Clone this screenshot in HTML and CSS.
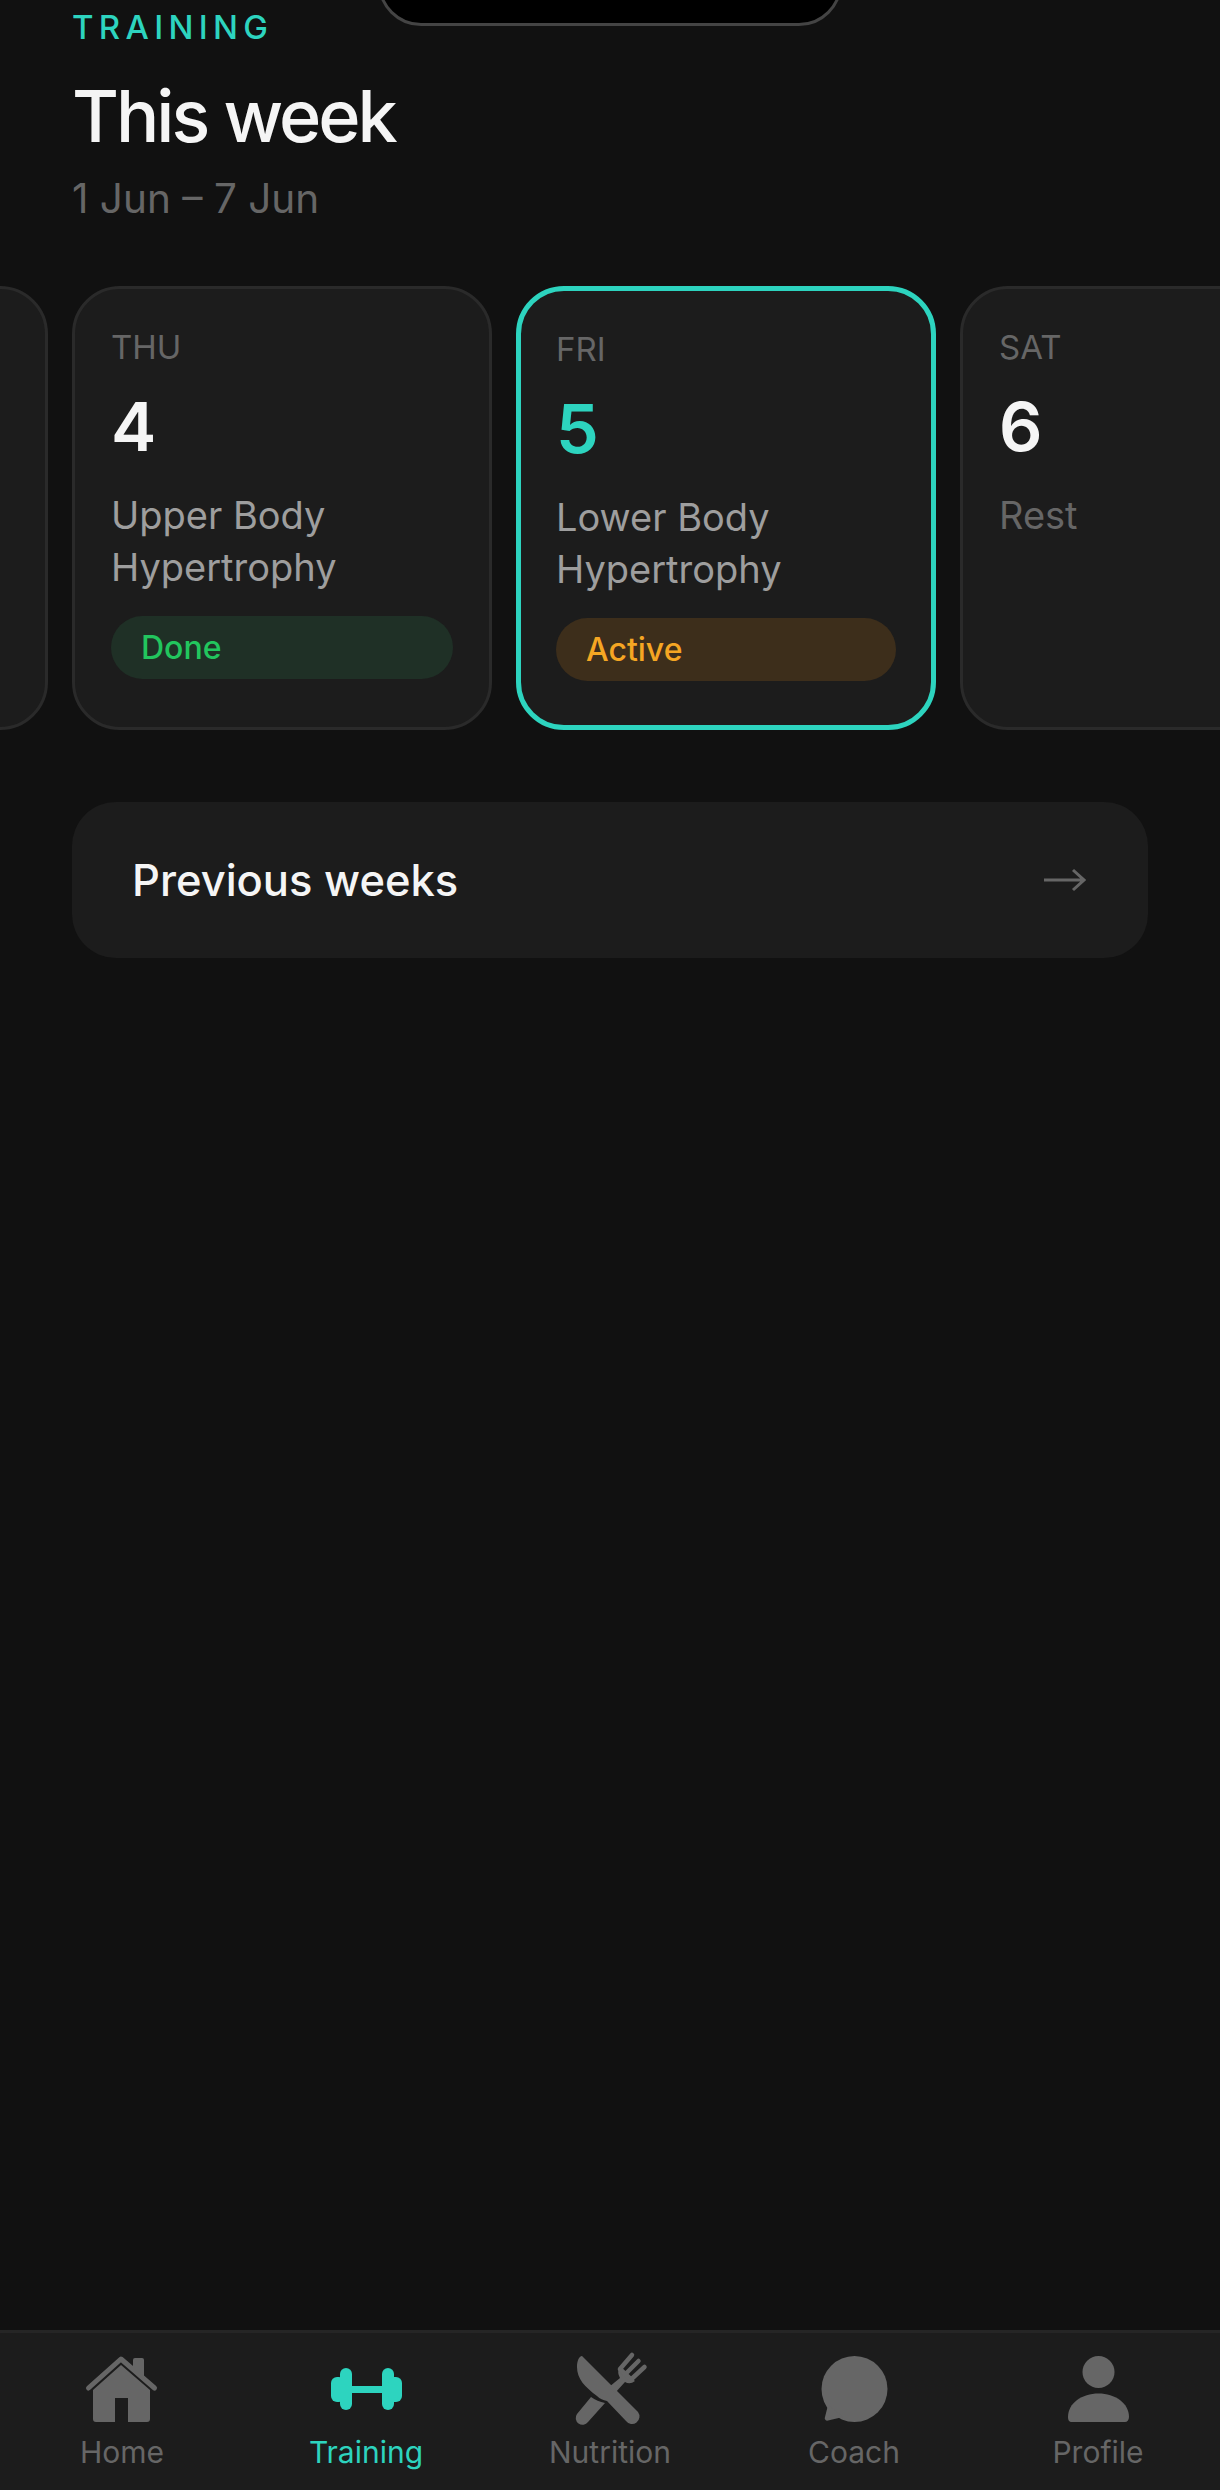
FILE: index.html
```html
<!DOCTYPE html>
<html lang="en">
<head>
    <meta charset="UTF-8">
    <meta name="viewport" content="width=device-width, initial-scale=1.0">
    <title>Training</title>
    <link rel="stylesheet" href="styles.css">
</head>
<body>
    <div class="notch"></div>

    <div class="page">
        <header class="header">
            <div class="eyebrow">TRAINING</div>
            <h1>This week</h1>
            <div class="date-range">1 Jun – 7 Jun</div>
        </header>

        <!-- Week strip, scrolled so that Thursday is first -->
        <div class="week-scroll">
            <div class="week-strip">
                <div class="day-card"></div>
                <div class="day-card">
                    <div class="day-name">THU</div>
                    <div class="day-number">4</div>
                    <div class="day-title">Upper Body Hypertrophy</div>
                    <div class="status status-done">Done</div>
                </div>
                <div class="day-card day-card-active">
                    <div class="day-name">FRI</div>
                    <div class="day-number">5</div>
                    <div class="day-title">Lower Body Hypertrophy</div>
                    <div class="status status-active">Active</div>
                </div>
                <div class="day-card">
                    <div class="day-name">SAT</div>
                    <div class="day-number">6</div>
                    <div class="day-title day-title-rest">Rest</div>
                </div>
            </div>
        </div>

        <div class="previous-weeks">
            <span>Previous weeks</span>
            <svg class="arrow" viewBox="0 0 42 24" width="42" height="24" fill="none" stroke="currentColor" stroke-width="3">
                <path d="M0 12H40M29 2L40 12L29 22"/>
            </svg>
        </div>
    </div>

    <nav class="tab-bar">
        <div class="tab">
            <svg class="tab-icon" viewBox="0 0 84 84" fill="currentColor">
                <path d="M56 13h7a2 2 0 0 1 2 2v18L54 24V15a2 2 0 0 1 2-2z"/>
                <path d="M9.500 43L42 14L75.500 43" fill="none" stroke="currentColor" stroke-width="5" stroke-linecap="round" stroke-linejoin="round"/>
                <path d="M42 20L71 45V74a3 3 0 0 1-3 3H49V53H36V77H17a3 3 0 0 1-3-3V45z"/>
            </svg>
            <span>Home</span>
        </div>
        <div class="tab tab-active">
            <svg class="tab-icon" viewBox="0 0 84 84" fill="currentColor">
                <rect x="8" y="32" width="14" height="25" rx="6"/>
                <rect x="17" y="23" width="12" height="42" rx="6"/>
                <rect x="59" y="23" width="12" height="42" rx="6"/>
                <rect x="65" y="32" width="14" height="25" rx="6"/>
                <rect x="28" y="41" width="32" height="7"/>
            </svg>
            <span>Training</span>
        </div>
        <div class="tab">
            <svg class="tab-icon" viewBox="0 0 84 84" fill="currentColor">
                <path d="M15 11L71 67a7 7 0 0 1-12 9L40 56C36 55 33 54 30 51C18 42 10 34 10 22C10 16 12 11 15 11z"/>
                <path d="M24 52C28 55 33 57 38 58L21 77a6.500 6.500 0 0 1-11-8z"/>
                <path d="M52 22Q50 28 53 33L42 42L48 48L58 37Q63 40 68 36z"/>
                <path d="M53 24L65 10M58.500 29L71.500 16M64 34.500L77.500 22M53 24L64 34.500" fill="none" stroke="currentColor" stroke-width="4.500" stroke-linecap="round"/>
            </svg>
            <span>Nutrition</span>
        </div>
        <div class="tab">
            <svg class="tab-icon" viewBox="0 0 84 84" fill="currentColor">
                <circle cx="43.500" cy="44" r="33"/>
                <path d="M17 60L14 72a2.500 2.500 0 0 0 3 3.500L32 72z"/>
            </svg>
            <span>Coach</span>
        </div>
        <div class="tab">
            <svg class="tab-icon" viewBox="0 0 84 84" fill="currentColor">
                <circle cx="43.500" cy="27" r="16"/>
                <path d="M13 72C13 58 27 48.500 43.500 48.500S74 58 74 72c0 3-2 5-4 5H17c-3 0-4-2-4-5z"/>
            </svg>
            <span>Profile</span>
        </div>
    </nav>
</body>
</html>
```

FILE: styles.css
```css
html, body {
    margin: 0;
    height: 100%;
}

body {
    background-color: #111111;
    font-family: 'Inter', 'Noto Sans', sans-serif;
    color: #f5f5f5;
    display: flex;
    flex-direction: column;
}

.notch {
    position: absolute;
    top: -60px;
    left: 378px;
    width: 464px;
    height: 86px;
    box-sizing: border-box;
    background-color: #000;
    border: 3px solid #444;
    border-radius: 44px;
}

.page {
    flex: 1;
    padding: 0 72px;
}

.eyebrow {
    margin-top: 8px;
    color: #2dd4bf;
    font-size: 33px;
    line-height: 38px;
    font-weight: 500;
    letter-spacing: 5.300px;
}

h1 {
    margin: 28px 0 0;
    font-size: 72px;
    line-height: 84px;
    font-weight: 500;
    letter-spacing: -3px;
}

.date-range {
    margin-top: 16px;
    color: #666;
    font-size: 40.500px;
    line-height: 50px;
}

.week-scroll {
    margin: 62px -72px 0;
    overflow: hidden;
}

.week-strip {
    display: flex;
    gap: 24px;
    margin-left: -372px;
    height: 444px;
}

.day-card {
    flex: 0 0 420px;
    box-sizing: border-box;
    padding: 40px 36px 36px;
    background-color: #1c1c1c;
    border: 3px solid #2a2a2a;
    border-radius: 48px;
}

.day-card-active {
    padding: 40px 35px 36px;
    border: 5px solid #2dd4bf;
}

.day-name {
    color: #666;
    font-size: 33px;
    line-height: 36px;
}

.day-number {
    margin-top: 21px;
    font-size: 68px;
    line-height: 80px;
    font-weight: 600;
}

.day-card-active .day-number {
    color: #2dd4bf;
}

.day-title {
    margin-top: 23px;
    color: #9e9e9e;
    font-size: 38px;
    line-height: 52px;
}

.day-title-rest {
    color: #666;
}

.status {
    margin-top: 23px;
    padding: 0 30px;
    height: 63px;
    border-radius: 32px;
    font-size: 32px;
    line-height: 63px;
    font-weight: 500;
}

.status-done {
    background-color: #1f3026;
    color: #22c55e;
}

.status-active {
    background-color: #3d2e1b;
    color: #f5a623;
}

.previous-weeks {
    margin-top: 72px;
    height: 156px;
    padding: 0 62px 0 60px;
    display: flex;
    justify-content: space-between;
    align-items: center;
    background-color: #1c1c1c;
    border-radius: 44px;
    font-size: 43.500px;
    font-weight: 500;
}

.arrow {
    color: #666;
}

.tab-bar {
    height: 160px;
    box-sizing: border-box;
    display: flex;
    background-color: #1c1c1c;
    border-top: 3px solid #252525;
}

.tab {
    flex: 1;
    display: flex;
    flex-direction: column;
    align-items: center;
    padding-top: 12px;
    color: #666;
    font-size: 30px;
    line-height: 40px;
}

.tab span {
    margin-top: 3px;
}

.tab-active {
    color: #2dd4bf;
}

.tab-icon {
    width: 84px;
    height: 84px;
    margin-right: 3px;
}
```
